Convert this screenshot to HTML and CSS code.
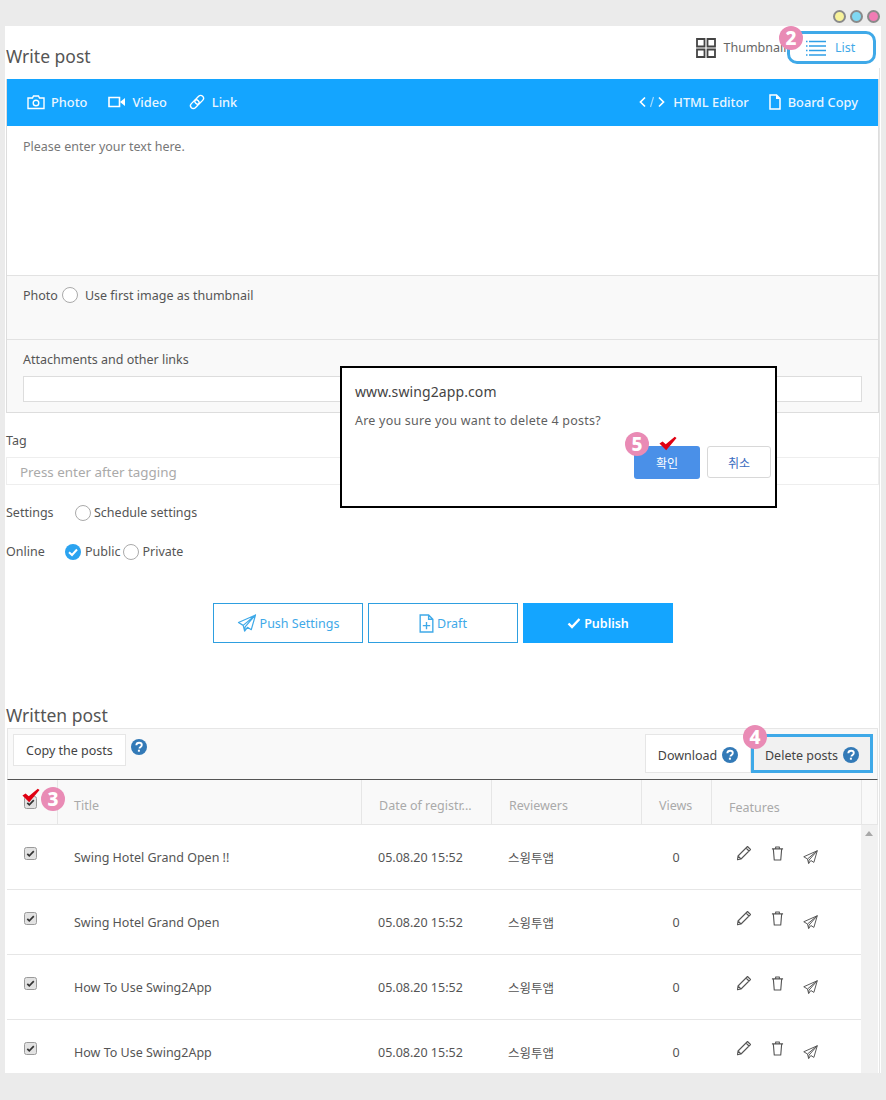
FILE: index.html
```html
<!DOCTYPE html>
<html lang="en">
<head>
<meta charset="utf-8">
<title>Write post</title>
<link rel="stylesheet" href="styles.css">
</head>
<body>
<svg width="0" height="0" class="defs">
  <symbol id="plane" viewBox="0 0 20 20"><path d="M19 1 1 9l5 3 1.500 6 3-4 4 2.500zM19 1 6 12M19 1 8 13.500l-.5 4.500" fill="none" stroke="currentColor" stroke-width="1.300" stroke-linejoin="round"/></symbol>
  <symbol id="q" viewBox="0 0 16 16"><circle cx="8" cy="8" r="8" fill="#337ab7"/><path d="M5.300 6.200C5.400 4.600 6.500 3.700 8.100 3.700c1.600 0 2.700.9 2.700 2.300 0 1.100-.6 1.600-1.400 2.100-.7.400-.9.700-.9 1.400" fill="none" stroke="#fff" stroke-width="1.900"/><rect x="6.900" y="10.700" width="2" height="2" fill="#fff"/></symbol>
  <symbol id="pencil" viewBox="0 0 16 16"><path d="M11.500 1.500 14.500 4.500 5 14 1.500 14.800 2 11zM10 3 13 6M2 11l3 3" fill="none" stroke="currentColor" stroke-width="1.100" stroke-linejoin="round"/></symbol>
  <symbol id="trash" viewBox="0 0 14 16"><path d="M1 3h12M2.500 3l1 12h7l1-12M5 3V1h4v2" fill="none" stroke="currentColor" stroke-width="1.200" stroke-linejoin="round"/></symbol>
  <symbol id="tick" viewBox="0 0 20 16"><path d="M.5 8 4 5.800 7.500 8.800 17.500 .5 19.500 2 8 15.500z" fill="#e00012"/></symbol>
  <symbol id="box-tick" viewBox="0 0 13 13"><rect x=".5" y=".5" width="12" height="12" rx="2" fill="#e2e2e2" stroke="#9a9a9a"/><path d="M3.300 6.800 5.300 8.800 9.800 4.200" fill="none" stroke="#333" stroke-width="1.700"/></symbol>
</svg>

<div class="page">
  <div class="dots"><i class="dot yellow"></i><i class="dot cyan"></i><i class="dot pink"></i></div>

  <main class="sheet">
    <header class="head">
      <h2 class="title">Write post</h2>
      <div class="views">
        <span class="view">
          <svg class="thumb-ico" viewBox="0 0 20 20"><path d="M1 1h7.500v7.500H1zM11.500 1H19v7.500h-7.500zM1 11.500h7.500V19H1zM11.500 11.500H19V19h-7.500z" fill="none" stroke="#444" stroke-width="1.800"/></svg>
          Thumbnail
        </span>
        <span class="view view-on">
          <svg class="list-ico" viewBox="0 0 20 16"><path d="M3 1.500h17M3 6h17M3 10.500h17M3 15h17M0 1.500h1.500M0 6h1.500M0 10.500h1.500M0 15h1.500" stroke="#2f9fe6" stroke-width="1.300"/></svg>
          List
        </span>
      </div>
    </header>

    <section class="editor">
      <div class="toolbar">
        <div class="tools">
          <span class="tool"><svg class="ico-w" viewBox="0 0 18 16"><path d="M1 4h4.500l1-2h5l1 2H17v10.500H1z" fill="none" stroke="#fff" stroke-width="1.400"/><circle cx="9" cy="9" r="2.800" fill="none" stroke="#fff" stroke-width="1.400"/></svg>Photo</span>
          <span class="tool"><svg class="ico-w" viewBox="0 0 18 16"><path d="M1 3.500h10.500v9H1z" fill="none" stroke="#fff" stroke-width="1.600"/><path d="M12 8l5-4v8z" fill="#fff"/></svg>Video</span>
          <span class="tool"><svg class="ico-w" viewBox="0 0 18 18"><g transform="rotate(-45 9 9)" fill="none" stroke="#fff" stroke-width="1.500"><rect x="0" y="5.800" width="11" height="6.400" rx="3.200"/><rect x="7" y="5.800" width="11" height="6.400" rx="3.200"/></g></svg>Link</span>
        </div>
        <div class="tools tools-r">
          <span class="tool"><svg class="ico-code" viewBox="0 0 26 12"><path d="M6 1.500 1.500 6 6 10.500M20 1.500 24.500 6 20 10.500" fill="none" stroke="#fff" stroke-width="1.700"/><path d="M14.500 1 11.500 11" fill="none" stroke="#9fd8ff" stroke-width="1.200"/></svg>HTML Editor</span>
          <span class="tool"><svg class="ico-doc" viewBox="0 0 12 16"><path d="M1 1h6.500L11 4.500V15H1z" fill="none" stroke="#fff" stroke-width="1.500"/><path d="M7 1v4h4z" fill="#fff"/></svg>Board Copy</span>
        </div>
      </div>
      <div class="body-text">Please enter your text here.</div>
      <div class="photo-row">
        <span>Photo</span><i class="radio"></i><span class="photo-opt">Use first image as thumbnail</span>
      </div>
      <div class="attach-row">
        <div class="attach-label">Attachments and other links</div>
        <div class="attach-input"></div>
      </div>
    </section>

    <div class="tag-label">Tag</div>
    <div class="tag-input">Press enter after tagging</div>

    <div class="opt opt-settings"><span class="opt-label">Settings</span><i class="radio"></i><span>Schedule settings</span></div>
    <div class="opt opt-online">
      <span class="opt-label opt-label-s">Online</span>
      <i class="radio radio-on"><svg viewBox="0 0 16 16"><path d="M4 8.300 7 11l5-5.500" fill="none" stroke="#fff" stroke-width="2"/></svg></i>
      <span class="opt-public">Public</span><i class="radio"></i><span>Private</span>
    </div>

    <div class="actions">
      <button class="btn"><svg class="btn-ico" viewBox="0 0 20 20"><use href="#plane"/></svg>Push Settings</button>
      <button class="btn"><svg class="btn-ico-doc" viewBox="0 0 14 18"><path d="M1 1h8l4 4v12H1zM9 1v4h4M7 7.500v7M3.500 11h7" fill="none" stroke="currentColor" stroke-width="1.300"/></svg>Draft</button>
      <button class="btn btn-solid"><svg class="btn-ico-tick" viewBox="0 0 14 12"><path d="M1.500 6.500 5 10l7.500-8" fill="none" stroke="#fff" stroke-width="2.400"/></svg>Publish</button>
    </div>

    <h2 class="title title-list">Written post</h2>

    <section class="board">
      <div class="board-bar">
        <div class="bar-l">
          <span class="bar-btn">Copy the posts</span>
          <svg class="q q-top"><use href="#q"/></svg>
        </div>
        <div class="bar-r">
          <span class="bar-btn bar-dl">Download <svg class="q"><use href="#q"/></svg></span>
          <span class="bar-btn bar-del">Delete posts <svg class="q"><use href="#q"/></svg></span>
        </div>
      </div>

      <div class="row row-head">
        <div class="c c-check"><svg class="box"><use href="#box-tick"/></svg></div>
        <div class="c c-title">Title</div>
        <div class="c c-date">Date of registr...</div>
        <div class="c c-rev">Reviewers</div>
        <div class="c c-views">Views</div>
        <div class="c c-feat">Features</div>
        <div class="c c-sb"></div>
      </div>

      <div class="rows">
        <div class="rows-list">
          <div class="row">
            <div class="c c-check"><svg class="box"><use href="#box-tick"/></svg></div>
            <div class="c c-title">Swing Hotel Grand Open !!</div>
            <div class="c c-date">05.08.20 15:52</div>
            <div class="c c-rev">스윙투앱</div>
            <div class="c c-views">0</div>
            <div class="c c-feat"><svg class="a-pen"><use href="#pencil"/></svg><svg class="a-trash"><use href="#trash"/></svg><svg class="a-plane"><use href="#plane"/></svg></div>
          </div>
          <div class="row">
            <div class="c c-check"><svg class="box"><use href="#box-tick"/></svg></div>
            <div class="c c-title">Swing Hotel Grand Open</div>
            <div class="c c-date">05.08.20 15:52</div>
            <div class="c c-rev">스윙투앱</div>
            <div class="c c-views">0</div>
            <div class="c c-feat"><svg class="a-pen"><use href="#pencil"/></svg><svg class="a-trash"><use href="#trash"/></svg><svg class="a-plane"><use href="#plane"/></svg></div>
          </div>
          <div class="row">
            <div class="c c-check"><svg class="box"><use href="#box-tick"/></svg></div>
            <div class="c c-title">How To Use Swing2App</div>
            <div class="c c-date">05.08.20 15:52</div>
            <div class="c c-rev">스윙투앱</div>
            <div class="c c-views">0</div>
            <div class="c c-feat"><svg class="a-pen"><use href="#pencil"/></svg><svg class="a-trash"><use href="#trash"/></svg><svg class="a-plane"><use href="#plane"/></svg></div>
          </div>
          <div class="row">
            <div class="c c-check"><svg class="box"><use href="#box-tick"/></svg></div>
            <div class="c c-title">How To Use Swing2App</div>
            <div class="c c-date">05.08.20 15:52</div>
            <div class="c c-rev">스윙투앱</div>
            <div class="c c-views">0</div>
            <div class="c c-feat"><svg class="a-pen"><use href="#pencil"/></svg><svg class="a-trash"><use href="#trash"/></svg><svg class="a-plane"><use href="#plane"/></svg></div>
          </div>
        </div>
        <div class="scroll"><i class="scroll-up"></i></div>
      </div>
    </section>
  </main>

  <div class="dialog">
    <div class="dlg-host">www.swing2app.com</div>
    <div class="dlg-msg">Are you sure you want to delete 4 posts?</div>
    <div class="dlg-btns">
      <span class="dlg-btn dlg-ok">확인</span>
      <span class="dlg-btn dlg-no">취소</span>
    </div>
  </div>

  <span class="badge b2">2</span>
  <span class="badge b3">3</span>
  <span class="badge b4">4</span>
  <span class="badge b5">5</span>
  <svg class="red r3"><use href="#tick"/></svg>
  <svg class="red r5"><use href="#tick"/></svg>
</div>
</body>
</html>
```

FILE: styles.css
```css
* { box-sizing: border-box; }
html, body { margin: 0; padding: 0; }
body {
  background: #ebebeb;
  color: #555;
  font-family: "Noto Sans", "Noto Sans CJK KR", sans-serif;
  font-size: 12.500px;
  height: 1100px;
  overflow: hidden;
}
.defs { position: absolute; }
.page { position: relative; width: 886px; height: 1100px; overflow: hidden; }

.dots { height: 26px; display: flex; justify-content: flex-end; gap: 4px; padding: 10px 6px 0 0; }
.dot { width: 13px; height: 13px; border-radius: 50%; border: 2px solid #8a8a8a; }
.yellow { background: #f7f29a; }
.cyan { background: #7fd8f2; }
.pink { background: #f07cb4; }

.sheet {
  margin-left: 5px; width: 876px; height: 1047px; overflow: hidden;
  background: linear-gradient(#e4e4e4, #e4e4e4) no-repeat right 1px top 42px / 1px 100%, #fff;
}

.head { height: 53px; display: flex; justify-content: space-between; padding: 5px 5px 0 1px; }
.title { margin: 0; font-weight: 400; font-size: 17.500px; line-height: 24px; color: #555; padding-top: 13px; }
.views { display: flex; align-items: flex-start; }
.view { display: flex; align-items: center; font-size: 12.500px; color: #666; }
.view:first-child { height: 33px; gap: 8px; margin-right: .5px; }
.thumb-ico { width: 20px; height: 20px; }
.view-on {
  width: 89px; height: 33px; border: 3px solid #3fa9e8; border-radius: 10px;
  color: #3fa9e8; padding-left: 16px; gap: 9px; background: #fff; position: relative;
}
.list-ico { width: 20px; height: 16px; }

.editor { margin-left: 1px; width: 873px; border-right: 1px solid #ddd; border-left: 1px solid #ddd; border-bottom: 1px solid #ddd; }
.toolbar { height: 47px; padding: 0 20px 2px; background: #14a5ff; color: #fff; display: flex; justify-content: space-between; align-items: center; font-weight: 500; font-size: 12.800px; }
.tools { display: flex; gap: 21px; }
.tools-r { gap: 19px; }
.tool { display: flex; align-items: center; gap: 6px; color: #eaf6ff; }
.ico-w { width: 18px; height: 16px; }
.ico-doc { width: 14px; height: 16px; }
.ico-code { width: 26px; height: 12px; margin-right: 2px; }
.body-text { height: 149px; padding: 11px 16px; color: #777; line-height: 20px; }
.photo-row { height: 64px; background: #f9f9f9; border-top: 1px solid #e2e2e2; display: flex; align-items: flex-start; gap: 4px; padding: 11px 16px; line-height: 18px; }
.photo-opt { margin-left: 3px; }
.attach-row { height: 73px; background: #f9f9f9; border-top: 1px solid #e2e2e2; padding: 11px 16px; }
.attach-label { line-height: 18px; margin-bottom: 7px; }
.attach-input { height: 26px; background: #fff; border: 1px solid #ddd; }
.radio { flex: none; display: block; width: 16px; height: 16px; border-radius: 50%; border: 1px solid #aaa; background: #fff; }
.radio-on { border: 0; background: #2ba3f0; }
.radio-on svg { display: block; width: 16px; height: 16px; }

.tag-label { margin-top: 19px; padding-left: 1px; line-height: 18px; }
.tag-input { margin: 7px 2px 0 1px; height: 28px; border: 1px solid #eee; padding-left: 13px; line-height: 28px; color: #aaa; font-size: 13.400px; }
.opt { display: flex; align-items: center; padding-left: 1px; line-height: 18px; }
.opt-settings { margin-top: 19px; }
.opt-online { margin-top: 21px; gap: 3px; }
.opt-public { margin-left: 1px; }
.opt-settings .radio { margin-right: 3px; }
.opt-label { width: 69px; }
.opt-label-s { width: 54px; flex: none; margin-right: 2px; }

.actions { margin-top: 42px; padding-left: 208px; display: flex; gap: 5px; }
.btn {
  width: 150px; height: 40px; border: 1px solid #2e9fe0; background: #fff; color: #3fa9e8;
  font: inherit; display: flex; align-items: center; justify-content: center; gap: 3px; padding: 0;
}
.btn-solid { background: #14a5ff; border-color: #14a5ff; color: #fff; font-weight: 600; }
.btn-ico { width: 20px; height: 19px; }
.btn-ico-doc { width: 15px; height: 19px; }
.btn-ico-tick { width: 14px; height: 12px; }

.title-list { padding-top: 0; margin-top: 60px; margin-bottom: 1px; margin-left: 1px; line-height: 24px; }

.board { margin-left: 2px; width: 871px; }
.board-bar { height: 52px; background: #f9f9f9; border: 1px solid #e6e6e6; border-bottom: 1px solid #555; display: flex; justify-content: space-between; padding: 5px 5px 0 5px; }
.bar-l { display: flex; gap: 5px; align-items: flex-start; }
.bar-r { display: flex; }
.bar-btn { display: flex; align-items: center; justify-content: center; gap: 5px; height: 32px; padding: 0 12px; background: #fff; border: 1px solid #e6e6e6; color: #444; white-space: nowrap; }
.bar-dl { height: 39px; width: 106px; padding: 3px 0 0; }
.bar-del { height: 39px; width: 122px; background: #f1f1f1; border: 3px solid #3fa9e8; margin-right: -1px; padding: 3px 0 0; }
.q { width: 16px; height: 16px; display: block; }
.q-top { margin-top: 5px; }

.row { display: grid; grid-template-columns: 50px 304px 130px 150px 70px 150px; height: 65px; border-bottom: 1px solid #e6e6e6; align-items: center; color: #555; }
.row-head { height: 45px; grid-template-columns: 50px 304px 130px 150px 70px 150px 17px; background: #f9f9f9; border-bottom: 1px solid #e6e6e6; color: #aaa; }
.row-head .c { height: 44px; display: flex; align-items: center; border-left: 1px solid #e6e6e6; padding-top: 4px; }
.row-head .c-check { border-left: 0; padding: 0 0 0 17px; }
.row-head .c-title { padding-left: 16px; padding-top: 7px; }
.row-head .c-date { padding-left: 17px; padding-top: 7px; }
.row-head .c-rev { padding-left: 17px; padding-top: 7px; }
.row-head .c-views { padding-left: 17px; padding-top: 6px; }
.row-head .c-feat { padding-left: 17px; padding-top: 10px; }
.row-head .c-sb { border-right: 1px solid #e6e6e6; }
.box { width: 13px; height: 13px; display: block; }
.rows .c-check { padding: 0 0 8px 17px; }
.rows .c-title { padding: 0 0 0 17px; }
.rows .c-date { padding: 0 0 0 17px; }
.rows .c-rev { padding: 0 0 0 17px; font-family: "Noto Sans CJK KR", sans-serif; }
.rows .c-views { text-align: center; }
.rows .c-feat { display: flex; align-items: flex-start; gap: 19px; padding: 0 0 4px 25px; }
.a-pen { width: 16px; height: 16px; color: #555; }
.a-trash { width: 13px; height: 15px; color: #555; margin-top: 1px; }
.a-plane { width: 15px; height: 15px; color: #555; margin-top: 5px; }

.rows { display: flex; height: 250px; overflow: hidden; }
.rows-list { width: 854px; }
.scroll { width: 17px; background: #f1f1f1; padding: 6px 4px; }
.scroll-up { display: block; width: 0; height: 0; border: 4px solid transparent; border-top: 0; border-bottom: 5px solid #a8a8a8; }

.dialog {
  position: absolute; left: 340px; top: 366px; width: 437px; height: 142px;
  background: #fff; border: 2px solid #000; padding: 14px 4px 0 13px;
  font-family: "Noto Sans", "Noto Sans CJK KR", sans-serif;
}
.dlg-host { font-size: 14px; line-height: 20px; color: #444; letter-spacing: .1px; }
.dlg-msg { font-size: 12.500px; line-height: 18px; margin-top: 10px; color: #5f5f5f; letter-spacing: .22px; }
.dlg-btns { display: flex; justify-content: flex-end; align-items: flex-start; gap: 7px; margin-top: 16px; }
.dlg-btn { display: flex; align-items: center; justify-content: center; border-radius: 3px; font-family: "Noto Sans CJK KR", sans-serif; font-size: 12px; }
.dlg-ok { width: 66px; height: 33px; background: #4a90e8; color: #fff; }
.dlg-no { width: 64px; height: 32px; background: #fff; color: #3a6cc0; border: 1px solid #d8d8d8; }

.badge {
  position: absolute; width: 24px; height: 24px; border-radius: 50%; background: #e98bb5; color: #fff;
  font-weight: 800; font-size: 19px; line-height: 24px; text-align: center;
}
.b2 { left: 779px; top: 26px; }
.b3 { left: 41px; top: 787px; }
.b4 { left: 743px; top: 725px; }
.b5 { left: 625px; top: 432px; }
.red { position: absolute; width: 18px; height: 15px; }
.r3 { left: 22px; top: 788px; }
.r5 { left: 659px; top: 436px; }
```
